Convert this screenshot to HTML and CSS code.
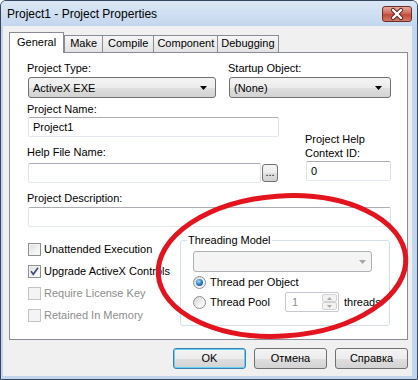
FILE: index.html
```html
<!DOCTYPE html>
<html lang="en">
<head>
    <meta charset="UTF-8">
    <title>Project1 - Project Properties</title>
    <link rel="stylesheet" href="styles.css">
</head>
<body>
    <div class="window">
        <!-- Caption -->
        <div class="titlebar">
            <span class="title">Project1 - Project Properties</span>
            <span class="close">
                <svg width="30" height="16" viewBox="0 0 30 16">
                    <path d="M11 4 L19 12 M19 4 L11 12" stroke="#5a2220" stroke-width="4.2" stroke-linecap="round"/>
                    <path d="M11 4 L19 12 M19 4 L11 12" stroke="#ffffff" stroke-width="2.4" stroke-linecap="round"/>
                </svg>
            </span>
        </div>

        <div class="client">
            <!-- Tabs -->
            <div class="tabs">
                <div class="tab active">General</div>
                <div class="tab">Make</div>
                <div class="tab">Compile</div>
                <div class="tab narrow">Component</div>
                <div class="tab narrow">Debugging</div>
            </div>

            <div class="tab-page">
                <div class="row-top">
                    <div class="field type-field">
                        <div class="label">Project Type:</div>
                        <div class="combo">
                            <span>ActiveX EXE</span>
                            <svg class="arrow" width="7" height="4" viewBox="0 0 7 4"><path d="M0 0 H7 L3.5 4 Z" fill="#000"/></svg>
                        </div>
                    </div>
                    <div class="field startup-field">
                        <div class="label">Startup Object:</div>
                        <div class="combo">
                            <span>(None)</span>
                            <svg class="arrow" width="7" height="4" viewBox="0 0 7 4"><path d="M0 0 H7 L3.5 4 Z" fill="#000"/></svg>
                        </div>
                    </div>
                </div>

                <div class="row-mid">
                    <div class="name-col">
                        <div class="label name-label">Project Name:</div>
                        <div class="textbox">Project1</div>
                        <div class="label help-label">Help File Name:</div>
                        <div class="help-line">
                            <div class="textbox help-box"></div>
                            <div class="dots">...</div>
                        </div>
                    </div>
                    <div class="context-col">
                        <div class="label">Project Help<br>Context ID:</div>
                        <div class="textbox">0</div>
                    </div>
                </div>

                <div class="label desc-label">Project Description:</div>
                <div class="textbox"></div>

                <div class="row-bottom">
                    <div class="checks">
                        <div class="check-row">
                            <span class="check"></span>
                            <span>Unattended Execution</span>
                        </div>
                        <div class="check-row">
                            <span class="check">
                                <svg width="11" height="11" viewBox="0 0 11 11"><path d="M2 5.2 L4.3 8.3 L9 1.8" fill="none" stroke="#3a4c7c" stroke-width="1.6"/></svg>
                            </span>
                            <span>Upgrade ActiveX Controls</span>
                        </div>
                        <div class="check-row disabled">
                            <span class="check"></span>
                            <span>Require License Key</span>
                        </div>
                        <div class="check-row disabled">
                            <span class="check"></span>
                            <span>Retained In Memory</span>
                        </div>
                    </div>

                    <fieldset class="group">
                        <legend>Threading Model</legend>
                        <div class="combo disabled">
                            <span></span>
                            <svg class="arrow" width="7" height="4" viewBox="0 0 7 4"><path d="M0 0 H7 L3.5 4 Z" fill="#a6a6a6"/></svg>
                        </div>
                        <div class="radio-row">
                            <span class="radio checked"></span>
                            <span>Thread per Object</span>
                        </div>
                        <div class="radio-row">
                            <div class="radio-label">
                                <span class="radio"></span>
                                <span>Thread Pool</span>
                            </div>
                            <div class="spin">
                                <span class="spin-value">1</span>
                                <div class="spin-buttons">
                                    <span class="spin-btn"><svg width="5" height="3" viewBox="0 0 5 3"><path d="M0 3 H5 L2.5 0 Z" fill="#a9a9a9"/></svg></span>
                                    <span class="spin-btn"><svg width="5" height="3" viewBox="0 0 5 3"><path d="M0 0 H5 L2.5 3 Z" fill="#a9a9a9"/></svg></span>
                                </div>
                            </div>
                            <span class="threads">threads</span>
                        </div>
                    </fieldset>
                </div>
            </div>

            <!-- Dialog buttons -->
            <div class="buttons">
                <div class="button default">OK</div>
                <div class="button">Отмена</div>
                <div class="button">Справка</div>
            </div>
        </div>

        <!-- Red marker circle drawn over the screenshot -->
        <svg class="marker" width="418" height="380" viewBox="0 0 418 380">
            <ellipse cx="282" cy="266" rx="124" ry="70" transform="rotate(-4 282 266)" fill="none" stroke="#e3141d" stroke-width="5"/>
        </svg>
    </div>
</body>
</html>
```

FILE: styles.css
```css
* {
    box-sizing: border-box;
}

body {
    margin: 0;
    font-family: "Liberation Sans", Arial, sans-serif;
    font-size: 11px;
    line-height: 14px;
    color: #000;
    background: #fff;
}

/* Window frame */
.window {
    position: relative;
    width: 418px;
    height: 380px;
    border: 1px solid #34465e;
    border-radius: 6px 6px 0 0;
    background: #c3d6ee;
    overflow: hidden;
}

.titlebar {
    height: 25px;
    display: flex;
    align-items: center;
    justify-content: space-between;
    padding: 0 5px 0 6px;
    background: linear-gradient(#dbe7f5, #c4d7ee);
}

.title {
    font-size: 12px;
}

.close {
    width: 30px;
    height: 16px;
    border: 1px solid #6e2d2b;
    border-radius: 3px;
    background: linear-gradient(#e8a99c, #cf6a5a 45%, #c24a3a 55%, #d57a62);
    display: flex;
    align-items: center;
    justify-content: center;
}

.close svg {
    margin: -1px;
}

.client {
    height: 350px;
    margin: 0 5px 0 2px;
    padding: 6px 4px 0 6px;
    background: #f0f0f0;
}

/* Tabs */
.tabs {
    display: flex;
    align-items: flex-end;
    height: 20px;
}

.tab {
    height: 17px;
    padding: 0 5px;
    margin-left: -1px;
    border: 1px solid #898c95;
    border-bottom: none;
    background: linear-gradient(#f6f6f6, #e3e3e3);
    line-height: 15px;
}

.tab.narrow {
    padding: 0 3px;
}

.tab.active {
    position: relative;
    z-index: 1;
    height: 21px;
    margin-left: 0;
    margin-right: 1px;
    margin-bottom: -1px;
    padding: 0 7px;
    background: #fff;
    line-height: 19px;
}

.tab-page {
    width: 399px;
    height: 288px;
    border: 1px solid #898c95;
    background: #fff;
    padding: 8px 16px 0 18px;
}

.label {
    margin-left: -1px;
}

/* Combo boxes */
.combo {
    height: 21px;
    margin-top: 2px;
    display: flex;
    align-items: center;
    padding: 0 8px 0 4px;
    border: 1px solid #707070;
    border-radius: 3px;
    background: linear-gradient(#f4f4f4 0%, #ececec 50%, #dfdfdf 51%, #d3d3d3 100%);
}

.combo .arrow {
    margin-left: auto;
}

.combo.disabled {
    margin-top: 2px;
    border-color: #adb2b5;
    background: #f4f4f4;
    padding-right: 5px;
}

.row-top {
    display: flex;
    gap: 13px;
}

.type-field {
    width: 188px;
}

.startup-field {
    flex: 1;
}

/* Text boxes */
.textbox {
    height: 20px;
    padding: 0 4px;
    border: 1px solid;
    border-color: #abadb3 #dbdfe6 #e3e9ef #e2e3ea;
    border-radius: 2px;
    background: #fff;
    line-height: 18px;
}

.row-mid {
    display: flex;
    justify-content: space-between;
    align-items: flex-end;
}

.name-col {
    width: 251px;
}

.name-label {
    margin-top: 4px;
    margin-bottom: 1px;
}

.help-label {
    margin-top: 8px;
    margin-bottom: 4px;
}

.help-line {
    display: flex;
    align-items: center;
}

.help-box {
    width: 233px;
}

.dots {
    width: 16px;
    height: 18px;
    margin-left: 1px;
    border: 1px solid #707070;
    border-radius: 3px;
    background: linear-gradient(#f4f4f4 0%, #ececec 50%, #dfdfdf 51%, #d3d3d3 100%);
    text-align: center;
    line-height: 15px;
}

.context-col {
    width: 85px;
    margin-bottom: 2px;
}

.context-col .textbox {
    margin-top: 1px;
}

.desc-label {
    margin-top: 8px;
    margin-bottom: 2px;
}

/* Check boxes and group */
.row-bottom {
    display: flex;
    justify-content: space-between;
    margin-top: 6px;
}

.checks {
    padding-top: 5px;
}

.check-row {
    height: 22px;
    display: flex;
    align-items: center;
    gap: 3px;
}

.check {
    width: 13px;
    height: 13px;
    border: 1px solid #8e8f8f;
    background: linear-gradient(135deg, #dcdcdc, #f6f6f6 70%);
    box-shadow: inset 0 0 0 1px #f4f4f4;
    display: flex;
    align-items: center;
    justify-content: center;
}

.check-row.disabled {
    color: #8d8d8d;
}

.check-row.disabled .check {
    border-color: #c4c4c4;
    background: #f4f4f4;
}

.group {
    width: 210px;
    min-width: 0;
    margin: 0 1px 0 0;
    padding: 2px 17px 10px 12px;
    border: 1px solid #d5dfe5;
    border-radius: 3px;
}

.group legend {
    padding: 0 1px;
    margin-left: -6px;
}

.radio-row {
    height: 20px;
    display: flex;
    align-items: center;
    gap: 4px;
    white-space: nowrap;
}

.radio-label {
    flex: none;
    width: 92px;
    display: flex;
    align-items: center;
    gap: 4px;
}

.radio {
    position: relative;
    flex: none;
    width: 13px;
    height: 13px;
    border: 1px solid #8e8f8f;
    border-radius: 50%;
    background: linear-gradient(135deg, #d6d6d6, #f8f8f8 75%);
}

.radio.checked::after {
    content: "";
    position: absolute;
    left: 2px;
    top: 2px;
    width: 7px;
    height: 7px;
    border-radius: 50%;
    background: radial-gradient(circle at 40% 35%, #a8e0ff, #2a7fc4 50%, #0d3d72);
}

.spin {
    flex: none;
    width: 54px;
    height: 20px;
    margin-left: -4px;
    display: flex;
    align-items: center;
    border: 1px solid #c6c9ce;
    border-radius: 2px;
    background: #fff;
    padding-left: 6px;
}

.spin-value {
    flex: 1;
    color: #8d8d8d;
}

.spin-buttons {
    width: 15px;
    margin-right: 1px;
    display: flex;
    flex-direction: column;
}

.spin-btn {
    height: 8px;
    display: flex;
    align-items: center;
    justify-content: center;
    border: 1px solid #d2d2d2;
    border-radius: 2px;
    background: #f2f2f2;
}

.threads {
    flex: none;
    margin-left: 1px;
}

/* Dialog buttons */
.buttons {
    width: 399px;
    margin-top: 8px;
    display: flex;
    justify-content: flex-end;
    gap: 8px;
}

.button {
    width: 73px;
    height: 21px;
    border: 1px solid #707070;
    border-radius: 3px;
    background: linear-gradient(#f4f4f4 0%, #ececec 50%, #dfdfdf 51%, #d3d3d3 100%);
    text-align: center;
    line-height: 19px;
}

.button.default {
    border-color: #3c7fb1;
    box-shadow: inset 0 0 0 1px #60d2f4;
}

.marker {
    position: absolute;
    left: -1px;
    top: -1px;
    pointer-events: none;
}
```
